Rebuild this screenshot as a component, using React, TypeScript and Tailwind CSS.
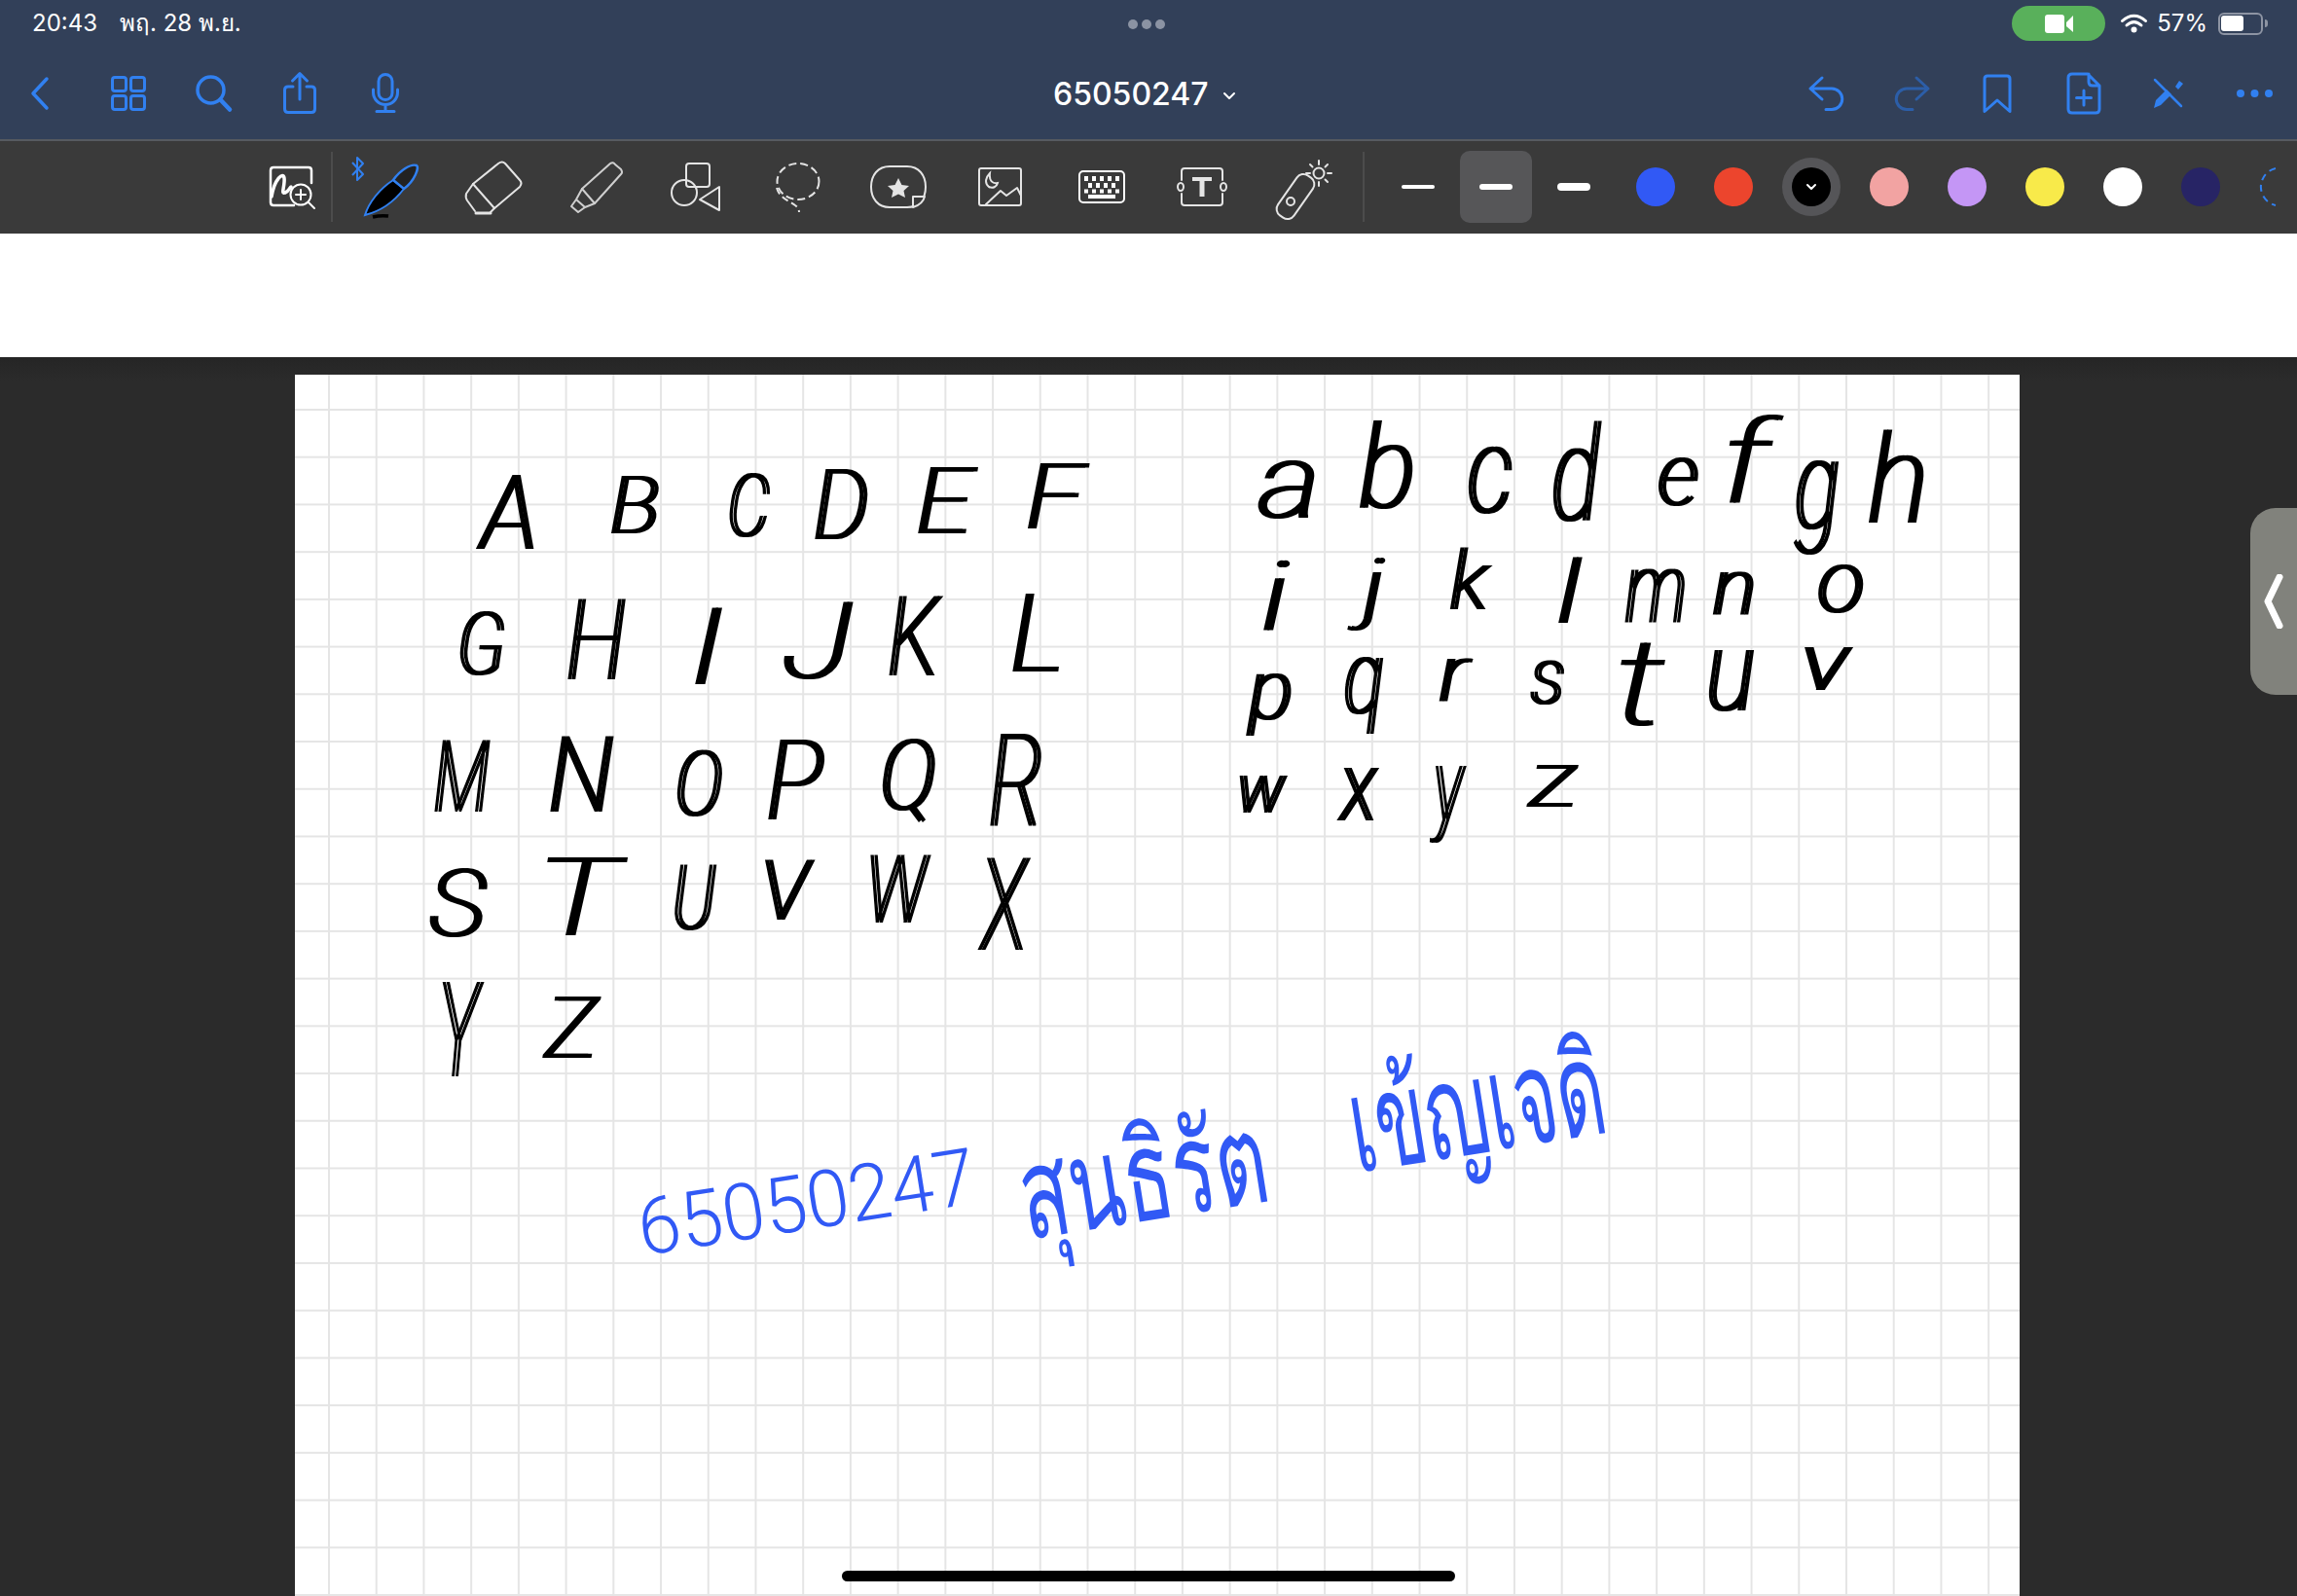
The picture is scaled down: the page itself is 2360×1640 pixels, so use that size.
import { ReactNode } from 'react';

type Box = [string, number, number, number, number];

// handwritten notes: char, left, right, top, bottom in page pixels
const blackInk: Box[] = [
  ['A', 490, 544, 489, 564], ['B', 629, 673, 490, 547], ['C', 750, 787, 488, 551], ['D', 838, 887, 483, 553],
  ['E', 944, 1000, 480, 547], ['F', 1057, 1115, 477, 542], ['G', 473, 514, 630, 693], ['H', 584, 638, 616, 698],
  ['I', 701, 752, 625, 702], ['J', 805, 872, 619, 697], ['K', 914, 964, 613, 693], ['L', 1041, 1083, 610, 689],
  ['M', 447, 499, 761, 833], ['N', 566, 626, 757, 833], ['O', 696, 738, 772, 838], ['P', 790, 844, 761, 841],
  ['Q', 907, 957, 760, 844], ['R', 1018, 1066, 755, 848], ['S', 442, 497, 893, 962], ['T', 560, 643, 881, 960],
  ['U', 693, 732, 889, 955], ['V', 787, 832, 884, 944], ['W', 895, 952, 879, 947], ['X', 1005, 1054, 881, 975],
  ['Y', 455, 493, 1009, 1105], ['Z', 558, 613, 1024, 1086],
  ['a', 1292, 1347, 474, 532], ['b', 1397, 1447, 432, 522], ['c', 1509, 1549, 460, 527], ['d', 1596, 1641, 432, 535],
  ['e', 1704, 1741, 471, 519], ['f', 1777, 1828, 427, 517], ['g', 1843, 1885, 473, 569], ['h', 1921, 1972, 442, 537],
  ['i', 1298, 1321, 575, 646], ['j', 1385, 1419, 573, 647], ['k', 1491, 1527, 563, 625], ['l', 1600, 1623, 573, 639],
  ['m', 1670, 1727, 585, 639], ['n', 1761, 1797, 588, 631], ['o', 1868, 1910, 581, 629], ['p', 1281, 1322, 693, 756],
  ['q', 1382, 1417, 676, 754], ['r', 1480, 1509, 677, 720], ['s', 1573, 1603, 679, 723], ['t', 1663, 1709, 660, 745],
  ['u', 1756, 1798, 669, 730], ['v', 1855, 1899, 666, 708], ['w', 1274, 1318, 798, 834], ['x', 1375, 1412, 790, 842],
  ['y', 1469, 1502, 787, 865], ['z', 1569, 1618, 787, 828],
];

const blueInk: Box[] = [
  ['65050247', 658, 1000, 1204, 1264],
  ['สุนธิรัต', 1052, 1298, 1150, 1290],
  ['เข้ญเจดิ', 1392, 1644, 1072, 1216],
];

const ctx = document.createElement('canvas').getContext('2d')!;

// fit a glyph's ink box onto the reference position, without stretching thin letters into bars
const fit = ([text, left, right, top, bottom]: Box, font: string) => {
  ctx.font = `${font} 100px Roboto, "Noto Sans", sans-serif`;
  const m = ctx.measureText(text);
  const inkH = m.actualBoundingBoxAscent + m.actualBoundingBoxDescent;
  const inkW = m.actualBoundingBoxLeft + m.actualBoundingBoxRight;
  const size = (100 * (bottom - top)) / inkH;
  const sx = Math.min((right - left) / ((inkW * size) / 100), 1.3);
  const drawn = (inkW * size * sx) / 100;
  const x = (left + right - drawn) / 2 + (m.actualBoundingBoxLeft * size * sx) / 100;
  const y = top + (m.actualBoundingBoxAscent * size) / 100;
  return { size, sx, x, y, cx: (left + right) / 2, cy: (top + bottom) / 2 };
};

const Line = ({ d, w = 3 }: { d: string; w?: number }) => (
  <path d={d} fill="none" stroke="currentColor" strokeWidth={w} strokeLinecap="round" strokeLinejoin="round" />
);

const Icon = ({ w, h, className, children }: { w: number; h: number; className?: string; children: ReactNode }) => (
  <svg width={w} height={h} viewBox={`0 0 ${w} ${h}`} className={`shrink-0 overflow-visible ${className ?? ''}`}>
    {children}
  </svg>
);

const StatusBar = () => (
  <div className="relative flex h-[48px] items-center justify-between pl-[33px] pr-[30px] font-['Inter','Noto_Sans',sans-serif] text-[24px] text-white">
    <div className="flex items-center">
      <span>20:43</span>
      <span className="ml-[23px]">พฤ. 28 พ.ย.</span>
    </div>
    <div className="absolute left-[1159px] top-[20px] flex gap-[4px]">
      <div className="h-[10px] w-[10px] rounded-full bg-[#8b93a3]" />
      <div className="h-[10px] w-[10px] rounded-full bg-[#8b93a3]" />
      <div className="h-[10px] w-[10px] rounded-full bg-[#8b93a3]" />
    </div>
    <div className="flex items-center">
      <div className="flex h-[36px] w-[96px] items-center justify-center rounded-full bg-[#59b05b]">
        <Icon w={29} h={19} className="text-white">
          <rect x="0" y="0" width="20" height="19" rx="3" fill="currentColor" />
          <path d="M22 8 L29 1 V18 L22 12 Z" fill="currentColor" />
        </Icon>
      </div>
      <Icon w={27} h={18} className="ml-[16px] text-white">
        <Line d="M1.5 6.5 C9 -0.5 18 -0.5 25.5 6.5" w={3} />
        <Line d="M6 11 C11 6.5 16 6.500 21 11" w={3} />
        <circle cx="13.5" cy="15.5" r="3" fill="currentColor" />
      </Icon>
      <span className="ml-[10px]">57%</span>
      <div className="ml-[11px] flex h-[23px] w-[46px] items-center rounded-[6px] border-2 border-[#8d94a3] p-[1px]">
        <div className="h-[16px] w-[23px] rounded-[3px] bg-white" />
      </div>
      <div className="ml-[2px] h-[8px] w-[3px] rounded-r-full bg-[#8d94a3]" />
    </div>
  </div>
);

const NavBar = () => (
  <div className="relative flex h-[97px] items-center justify-between border-b-2 border-[#565a60] text-[#3180f0]">
    <div className="flex items-center">
      <Icon w={18} h={34} className="ml-[32px]">
        <Line d="M16 2 L2 17 L16 32" w={3.5} />
      </Icon>
      <Icon w={36} h={36} className="ml-[64px]">
        <rect x="1.5" y="1.5" width="14" height="14" rx="2.5" fill="none" stroke="currentColor" strokeWidth="3" />
        <rect x="20.5" y="1.5" width="14" height="14" rx="2.5" fill="none" stroke="currentColor" strokeWidth="3" />
        <rect x="1.5" y="20.5" width="14" height="14" rx="2.5" fill="none" stroke="currentColor" strokeWidth="3" />
        <rect x="20.5" y="20.5" width="14" height="14" rx="2.5" fill="none" stroke="currentColor" strokeWidth="3" />
      </Icon>
      <Icon w={37} h={37} className="ml-[51px]">
        <circle cx="15.5" cy="15.5" r="13.5" fill="none" stroke="currentColor" strokeWidth="3.5" />
        <Line d="M25.5 25.5 L35 35.5" w={4.5} />
      </Icon>
      <Icon w={34} h={43} className="ml-[53px]">
        <Line d="M10 15 H5 Q1.5 15 1.5 18.5 V38 Q1.5 41.5 5 41.5 H29 Q32.5 41.5 32.5 38 V18.5 Q32.5 15 29 15 H24" />
        <Line d="M17 28 V2 M9.5 9 L17 1.5 L24.5 9" />
      </Icon>
      <Icon w={28} h={41} className="ml-[57px]">
        <rect x="7" y="1.5" width="14" height="26" rx="7" fill="none" stroke="currentColor" strokeWidth="3" />
        <Line d="M1.5 17 V20 A12.5 12.5 0 0 0 26.5 20 V17 M14 33 V39.5 M5 39.5 H23" />
      </Icon>
    </div>
    <div className="absolute left-[1082px] top-[25px] flex items-center font-['Inter',sans-serif] text-[32px] font-medium text-white">
      65050247
      <Icon w={12} h={7} className="ml-[15px] mt-[2px] text-white">
        <Line d="M1 1 L6 6 L11 1" w={2} />
      </Icon>
    </div>
    <div className="flex items-center pr-[25px]">
      <Icon w={37} h={36}>
        <Line d="M14 2 L2 13 L14 24 M2 13 H24 A10.5 10.5 0 0 1 24 34.5 H18" />
      </Icon>
      <Icon w={37} h={36} className="ml-[51px] text-[#2c5ea8]">
        <Line d="M23 2 L35 13 L23 24 M35 13 H13 A10.5 10.5 0 0 0 13 34.5 H19" />
      </Icon>
      <Icon w={30} h={40} className="ml-[54px]">
        <Line d="M2 38.5 V5 Q2 2 5 2 H25 Q28 2 28 5 V38.5 L15 27 Z" />
      </Icon>
      <Icon w={36} h={44} className="ml-[56px]">
        <Line d="M22 2 H6 Q2 2 2 6 V38 Q2 42 6 42 H30 Q34 42 34 38 V14 Z M23 2 V10 Q23 14 27 14 H33" />
        <Line d="M18 19 V34 M10.5 26.5 H25.5" />
      </Icon>
      <Icon w={31} h={31} className="ml-[53px]">
        <Line d="M2 2 L29 29" w={2.5} />
        <path d="M1 31 L3 23 L14 12 L19 17 L8 28 Z" fill="currentColor" />
        <path d="M23 9 L27 3 L31 6 L26 12 Z" fill="currentColor" />
      </Icon>
      <Icon w={37} h={8} className="ml-[55px]">
        <circle cx="4" cy="4" r="4" fill="currentColor" />
        <circle cx="18.5" cy="4" r="4" fill="currentColor" />
        <circle cx="33" cy="4" r="4" fill="currentColor" />
      </Icon>
    </div>
  </div>
);

const colors = ['bg-[#3159f5]', 'bg-[#ec452d]', 'bg-black', 'bg-[#f2a3a2]', 'bg-[#c496f5]', 'bg-[#f8ea4a]', 'bg-white', 'bg-[#272465]'];

const ToolBar = () => (
  <div className="flex h-[95px] shrink-0 items-center overflow-hidden bg-[#3a3a3a] pb-[1px] text-[#e4e4e4]">
    <Icon w={48} h={44} className="ml-[276px] text-white">
      <Line d="M26 41 H5 Q2 41 2 38 V5 Q2 2 5 2 H41 Q44 2 44 5 V18" w={2.5} />
      <Line d="M3 32 C6 14 15 6 16 13 C17 21 12 30 17 28 C20 27 21 24 23 22" w={3.5} />
      <circle cx="33" cy="30" r="10.5" fill="#3a3a3a" stroke="currentColor" strokeWidth="2" />
      <Line d="M41 38 L47 44" w={2} />
      <Line d="M33 25 V35 M28 30 H38" w={2} />
    </Icon>
    <div className="ml-[16px] h-[72px] w-[2px] bg-[#4c4c4c]" />
    <Icon w={69} h={63} className="ml-[19px]">
      <path d="M1 6 L12 18 L6 24 V1 L12 7 L1 19" fill="none" stroke="#3180f0" strokeWidth="2" strokeLinejoin="round" />
      <path d="M14 60 C18 47 29 33 43 24 L54 33 C44 46 30 56 14 60 Z" fill="#000" stroke="#3180f0" strokeWidth="2" />
      <path d="M43 24 C50 14 61 7 67 9 C70 11 65 25 54 33 Z" fill="#222" stroke="#3180f0" strokeWidth="2.5" />
      <path d="M22 62 Q30 60 38 61" fill="none" stroke="#000" strokeWidth="3.5" />
    </Icon>
    <Icon w={58} h={55} className="ml-[48px]">
      <Line d="M34 3 Q38 0 41 3 L56 20 Q59 23 56 27 L30 49 L8 24 Z" w={2} />
      <Line d="M8 24 L1 34 Q0 38 2 41 L10 52 M30 49 L26 53" w={2} />
      <Line d="M11 54 H26" w={3} />
    </Icon>
    <Icon w={53} h={51} className="ml-[50px] text-[#cfcfcf]">
      <Line d="M12 27 L41 1 Q44 -1 46 2 L52 7 Q54 10 52 12 L25 42 Z" w={2} />
      <Line d="M12 27 L6 38 L15 46 L25 42 M6 38 L1 45 L8 51 L15 46" w={2} />
    </Icon>
    <Icon w={50} h={50} className="ml-[51px]">
      <rect x="15" y="1" width="24" height="24" rx="3" fill="none" stroke="currentColor" strokeWidth="2" />
      <circle cx="13" cy="31" r="13" fill="none" stroke="currentColor" strokeWidth="2" />
      <Line d="M29 38 L49 25 V49 Z" w={2} />
    </Icon>
    <Icon w={46} h={51} className="ml-[57px]">
      <ellipse cx="23" cy="19.500" rx="21.500" ry="18.500" fill="none" stroke="currentColor" strokeWidth="2" strokeDasharray="8 4" />
      <path d="M1 26 C4 37 15 40 20 44 C23 46 24 49 24 51" fill="none" stroke="currentColor" strokeWidth="2" strokeDasharray="7 4" />
    </Icon>
    <Icon w={58} h={44} className="ml-[51px]">
      <path d="M20 1 H38 C50 1 57 10 57 22 C57 34 50 43 38 43 H20 C8 43 1 34 1 22 C1 10 8 1 20 1 Z" fill="none" stroke="currentColor" strokeWidth="2" />
      <polygon points="29,13 32.5,20 40,21 34.5,26 36,33 29,29.5 22,33 23.5,26 18,21 25.500,20" fill="currentColor" />
      <path d="M44 43 V32 H56 Q54 40 44 43 Z" fill="#3a3a3a" stroke="currentColor" strokeWidth="2" strokeLinejoin="round" />
    </Icon>
    <Icon w={45} h={40} className="ml-[53px]">
      <rect x="1" y="1" width="43" height="38" rx="2" fill="none" stroke="currentColor" strokeWidth="2" />
      <path d="M12 6 C8 10 6 16 11 20 C15 22 19 20 20 16 C15 17 11 14 12 6 Z" fill="none" stroke="currentColor" strokeWidth="2" />
      <Line d="M8 38 L23 24 L29 29 L40 21 L44 29" w={2} />
    </Icon>
    <Icon w={48} h={34} className="ml-[58px] text-white">
      <rect x="1" y="1" width="46" height="32" rx="4" fill="none" stroke="currentColor" strokeWidth="2" />
      <path d="M6 6 h4 v5 h-4z M14 6 h4 v5 h-4z M22 6 h4 v5 h-4z M30 6 h4 v5 h-4z M38 6 h4 v5 h-4z M10 13 h4 v5 h-4z M18 13 h4 v5 h-4z M26 13 h4 v5 h-4z M34 13 h4 v5 h-4z" fill="currentColor" />
      <path d="M6 19.500 h4 v4 h-4z M14 19.500 h4 v4 h-4z M22 19.500 h4 v4 h-4z M30 19.500 h4 v4 h-4z M38 19.500 h4 v4 h-4z M10 25 h28 v4 h-28z" fill="currentColor" />
    </Icon>
    <Icon w={52} h={40} className="ml-[53px]">
      <Line d="M5 13 V4 Q5 1 8 1 H44 Q47 1 47 4 V13 M5 27 V36 Q5 39 8 39 H44 Q47 39 47 36 V27" w={2} />
      <ellipse cx="4" cy="20" rx="3" ry="4" fill="none" stroke="currentColor" strokeWidth="2" />
      <ellipse cx="48" cy="20" rx="3" ry="4" fill="none" stroke="currentColor" strokeWidth="2" />
      <rect x="16" y="10" width="20" height="4" fill="currentColor" />
      <rect x="23.500" y="10" width="5" height="20" fill="currentColor" />
    </Icon>
    <Icon w={56} h={55} className="ml-[51px]">
      <rect x="-10" y="-25" width="20" height="50" rx="8" transform="translate(19 37) rotate(35)" fill="none" stroke="currentColor" strokeWidth="2" />
      <circle cx="14" cy="42" r="4" fill="none" stroke="currentColor" strokeWidth="2" />
      <circle cx="43" cy="13" r="5.5" fill="none" stroke="currentColor" strokeWidth="2" />
      <Line d="M43 0 V4 M43 22 V26 M56 13 H52 M34 13 H30 M34 4 L36.500 6.500 M52 4 L49.500 6.500 M52 22 L49.500 19.500" w={2} />
    </Icon>
    <div className="ml-[32px] h-[72px] w-[2px] bg-[#4c4c4c]" />
    <div className="ml-[18px] flex h-[74px] w-[74px] shrink-0 items-center justify-center">
      <div className="h-[4px] w-[34px] rounded-full bg-white" />
    </div>
    <div className="ml-[6px] flex h-[74px] w-[74px] shrink-0 items-center justify-center rounded-[10px] bg-[#565658]">
      <div className="h-[6px] w-[34px] rounded-full bg-white" />
    </div>
    <div className="ml-[6px] flex h-[74px] w-[74px] shrink-0 items-center justify-center">
      <div className="h-[8px] w-[34px] rounded-full bg-white" />
    </div>
    <div className="ml-[7px] flex shrink-0 items-center">
      {colors.map((c) => (
        <div key={c} className="flex w-[80px] items-center justify-center">
          {c === 'bg-black' ? (
            <div className="flex h-[60px] w-[60px] items-center justify-center rounded-full bg-[#555558]">
              <div className={`flex h-[40px] w-[40px] items-center justify-center rounded-full ${c}`}>
                <Icon w={10} h={6} className="text-white">
                  <Line d="M1 1 L5 5 L9 1" w={2} />
                </Icon>
              </div>
            </div>
          ) : (
            <div className={`h-[40px] w-[40px] rounded-full ${c}`} />
          )}
        </div>
      ))}
      <Icon w={22} h={40} className="ml-[16px] text-[#3180f0]">
        <path d="M21 1 A19.500 19.500 0 0 0 21 39" fill="none" stroke="currentColor" strokeWidth="2" strokeDasharray="7 5" />
      </Icon>
    </div>
  </div>
);

const Sheet = () => (
  <div className="relative ml-[303px] h-full w-[1772px] bg-white bg-[linear-gradient(to_right,#e5e5e5_2px,transparent_2px),linear-gradient(to_bottom,#e5e5e5_2px,transparent_2px)] bg-[size:48.72px_48.72px] bg-[position:34px_35px]">
    <svg viewBox="303 385 1772 1255" className="absolute inset-0 h-[1255px] w-[1772px]">
      <g className="font-['Roboto','Noto_Sans',sans-serif] font-thin italic drop-shadow-[4px_0_0_#000]">
        {blackInk.map((b) => {
          const f = fit(b, 'italic 100');
          return (
            <text key={b[0]} fontSize={f.size} transform={`translate(${f.x} ${f.y}) scale(${f.sx} 1)`} fill="#000" stroke="#000" strokeWidth="2">
              {b[0]}
            </text>
          );
        })}
      </g>
      <g className="font-['Roboto','Noto_Sans',sans-serif] font-light">
        {blueInk.map((b) => {
          const f = fit(b, '300');
          return (
            <g key={b[0]} transform={`rotate(-9 ${f.cx} ${f.cy})`}>
              <text fontSize={f.size} transform={`translate(${f.x} ${f.y}) scale(${f.sx} 1)`} fill="#3159f5">
                {b[0]}
              </text>
            </g>
          );
        })}
      </g>
    </svg>
  </div>
);

const App = () => (
  <div className="relative flex h-screen w-screen flex-col overflow-hidden bg-[#2b2b2b]">
    <div className="shrink-0 bg-[#324059]">
      <StatusBar />
      <NavBar />
    </div>
    <ToolBar />
    <div className="h-[127px] shrink-0 bg-white" />
    <div className="flex min-h-0 flex-1 bg-[linear-gradient(to_bottom,#252525,#2b2b2b_24px)] pt-[18px]">
      <Sheet />
    </div>
    {/* side panel handle */}
    <div className="absolute right-0 top-[522px] flex h-[192px] w-[48px] items-center rounded-l-[26px] bg-[#81827c] pl-[14px]">
      <svg width="20" height="56" viewBox="0 0 20 56">
        <path d="M16 3 L4 28 L16 53" fill="none" stroke="#fff" strokeWidth="7" strokeLinecap="round" strokeLinejoin="round" />
      </svg>
    </div>
    {/* home indicator */}
    <div className="absolute bottom-[15px] left-[865px] h-[11px] w-[630px] rounded-full bg-black" />
  </div>
);

export default App;
